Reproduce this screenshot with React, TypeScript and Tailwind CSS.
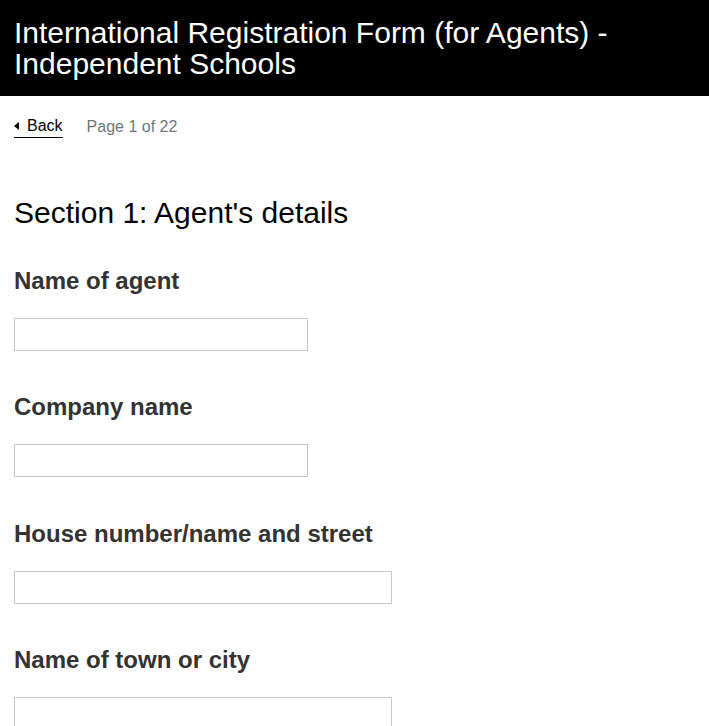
const font = { fontFamily: '"Liberation Sans", Arial, Helvetica, sans-serif' };

const fields = [
  { label: "Name of agent", width: "w-[294px]" },
  { label: "Company name", width: "w-[294px]" },
  { label: "House number/name and street", width: "w-[378px]" },
  { label: "Name of town or city", width: "w-[378px]" },
];

export default function App() {
  return (
    <div className="min-h-[726px] bg-white" style={font}>
      <header className="bg-black px-[14px] pt-[17px] pb-[16px]">
        <h1 className="text-[30px] leading-[31.25px] text-white font-normal">
          International Registration Form (for Agents) -
          <br />
          Independent Schools
        </h1>
      </header>
      <main className="px-[14px]">
        <div className="mt-[20px] flex items-center gap-[24px] text-[16px] leading-[20px]">
          <a
            href="#"
            className="flex items-center gap-[8px] border-b border-black pb-[1px] text-black"
          >
            <span className="inline-block h-0 w-0 border-y-[4px] border-r-[5px] border-y-transparent border-r-black" />
            Back
          </a>
          <span className="text-[#6f777b]">Page 1 of 22</span>
        </div>
        <h2 className="mt-[57px] text-[30px] leading-[36px] text-black">
          Section 1: Agent's details
        </h2>
        <form className="mt-[35px] flex flex-col">
          {fields.map((f, idx) => (
            <div key={f.label} className={idx === 0 ? "" : "mt-[41.67px]"}>
              <label className="block text-[24px] leading-[30px] font-bold text-[#333]">
                {f.label}
              </label>
              <input
                type="text"
                className={`mt-[22px] block h-[33px] ${f.width} border border-[#c8c8c8] bg-white`}
              />
            </div>
          ))}
        </form>
      </main>
    </div>
  );
}
